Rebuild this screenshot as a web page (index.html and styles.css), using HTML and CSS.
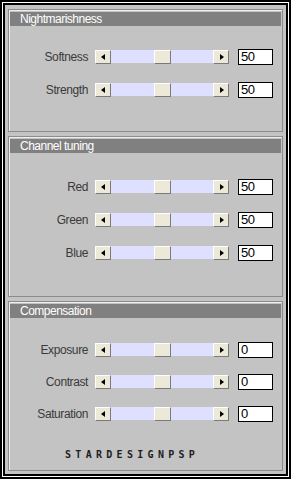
FILE: index.html
```html
<!DOCTYPE html>
<html lang="en">
<head>
  <meta charset="UTF-8" />
  <title>Nightmarishness</title>
  <link rel="stylesheet" href="styles.css">
</head>
<body>

  <div class="window">
    <div class="window-inner">
      <div class="window-body">

        <section class="group group-night">
          <div class="group-title">Nightmarishness</div>
          <div class="rows">
            <div class="row">
              <span class="label">Softness</span>
              <div class="scroll"><span class="btn btn-left"></span><span class="track"><span class="thumb"></span></span><span class="btn btn-right"></span></div>
              <div class="value">50</div>
            </div>
            <div class="row">
              <span class="label">Strength</span>
              <div class="scroll"><span class="btn btn-left"></span><span class="track"><span class="thumb"></span></span><span class="btn btn-right"></span></div>
              <div class="value">50</div>
            </div>
          </div>
        </section>

        <section class="group group-channel">
          <div class="group-title">Channel tuning</div>
          <div class="rows">
            <div class="row">
              <span class="label">Red</span>
              <div class="scroll"><span class="btn btn-left"></span><span class="track"><span class="thumb"></span></span><span class="btn btn-right"></span></div>
              <div class="value">50</div>
            </div>
            <div class="row">
              <span class="label">Green</span>
              <div class="scroll"><span class="btn btn-left"></span><span class="track"><span class="thumb"></span></span><span class="btn btn-right"></span></div>
              <div class="value">50</div>
            </div>
            <div class="row">
              <span class="label">Blue</span>
              <div class="scroll"><span class="btn btn-left"></span><span class="track"><span class="thumb"></span></span><span class="btn btn-right"></span></div>
              <div class="value">50</div>
            </div>
          </div>
        </section>

        <section class="group group-comp">
          <div class="group-title">Compensation</div>
          <div class="rows">
            <div class="row">
              <span class="label">Exposure</span>
              <div class="scroll"><span class="btn btn-left"></span><span class="track"><span class="thumb"></span></span><span class="btn btn-right"></span></div>
              <div class="value">0</div>
            </div>
            <div class="row">
              <span class="label">Contrast</span>
              <div class="scroll"><span class="btn btn-left"></span><span class="track"><span class="thumb"></span></span><span class="btn btn-right"></span></div>
              <div class="value">0</div>
            </div>
            <div class="row">
              <span class="label">Saturation</span>
              <div class="scroll"><span class="btn btn-left"></span><span class="track"><span class="thumb"></span></span><span class="btn btn-right"></span></div>
              <div class="value">0</div>
            </div>
          </div>
          <div class="watermark">STARDESIGNPSP</div>
        </section>

      </div>
    </div>
  </div>

</body>
</html>
```

FILE: styles.css
```css
body {
  margin: 0;
  background: #c3c3c3;
  font-family: "Liberation Sans", Arial, sans-serif;
}

.window {
  width: 291px;
  height: 479px;
  box-sizing: border-box;
  border: 2px solid #000;
}

.window-inner {
  height: 100%;
  box-sizing: border-box;
  border: 1px solid #fff;
}

.window-body {
  height: 100%;
  box-sizing: border-box;
  border: 2px solid #000;
  background: #c3c3c3;
  padding: 4px 3px 0 3px;
  display: flex;
  flex-direction: column;
  gap: 4px;
}

/* group boxes */
.group {
  box-sizing: border-box;
  border: 1px solid #8c8c8c;
  box-shadow: inset 1px 1px 0 #eeeeee;
  padding: 2px 1px 0 1px;
}

.group-night { height: 123px; }
.group-channel { height: 161px; }
.group-comp { height: 170px; }

.group-title {
  height: 14px;
  line-height: 14px;
  background: #808080;
  color: #fff;
  font-size: 12px;
  letter-spacing: -0.5px;
  padding-left: 10px;
}

.rows {
  display: flex;
  flex-direction: column;
  gap: 17px;
}

.group-night .rows { margin-top: 23px; }
.group-channel .rows { margin-top: 26px; }
.group-comp .rows { margin-top: 24px; gap: 16px; }

.row {
  display: flex;
  align-items: center;
  height: 16px;
}

.label {
  width: 78px;
  margin-right: 7px;
  text-align: right;
  font-size: 12px;
  letter-spacing: -0.4px;
  color: #3a3a3a;
}

/* scrollbar */
.scroll {
  display: flex;
  width: 134px;
  height: 14px;
  margin-right: 9px;
}

.btn,
.thumb {
  box-sizing: border-box;
  background: #ece9d8;
  border: 1px solid;
  border-color: #fff #7a7a7a #7a7a7a #fff;
}

.btn {
  position: relative;
  width: 16px;
  height: 14px;
  flex: none;
}

.btn::before {
  content: "";
  position: absolute;
  top: 3px;
  width: 0;
  height: 0;
  border-top: 3px solid transparent;
  border-bottom: 3px solid transparent;
}

.btn-left::before {
  left: 5px;
  border-right: 4px solid #000;
}

.btn-right::before {
  left: 6px;
  border-left: 4px solid #000;
}

.track {
  flex: 1;
  height: 13px;
  background: #dfdfff;
  display: flex;
}

.thumb {
  width: 17px;
  height: 14px;
  margin-left: 43px;
}

.value {
  box-sizing: border-box;
  width: 35px;
  height: 16px;
  border: 1px solid #000;
  background: #fff;
  font-size: 13px;
  line-height: 14px;
  letter-spacing: -0.5px;
  padding-left: 2px;
  color: #000;
}

.watermark {
  margin-top: 27px;
  padding-left: 55px;
  font-family: "DejaVu Sans Mono", monospace;
  font-size: 10px;
  font-weight: bold;
  letter-spacing: 4.3px;
  color: #1e1e1e;
}
```
